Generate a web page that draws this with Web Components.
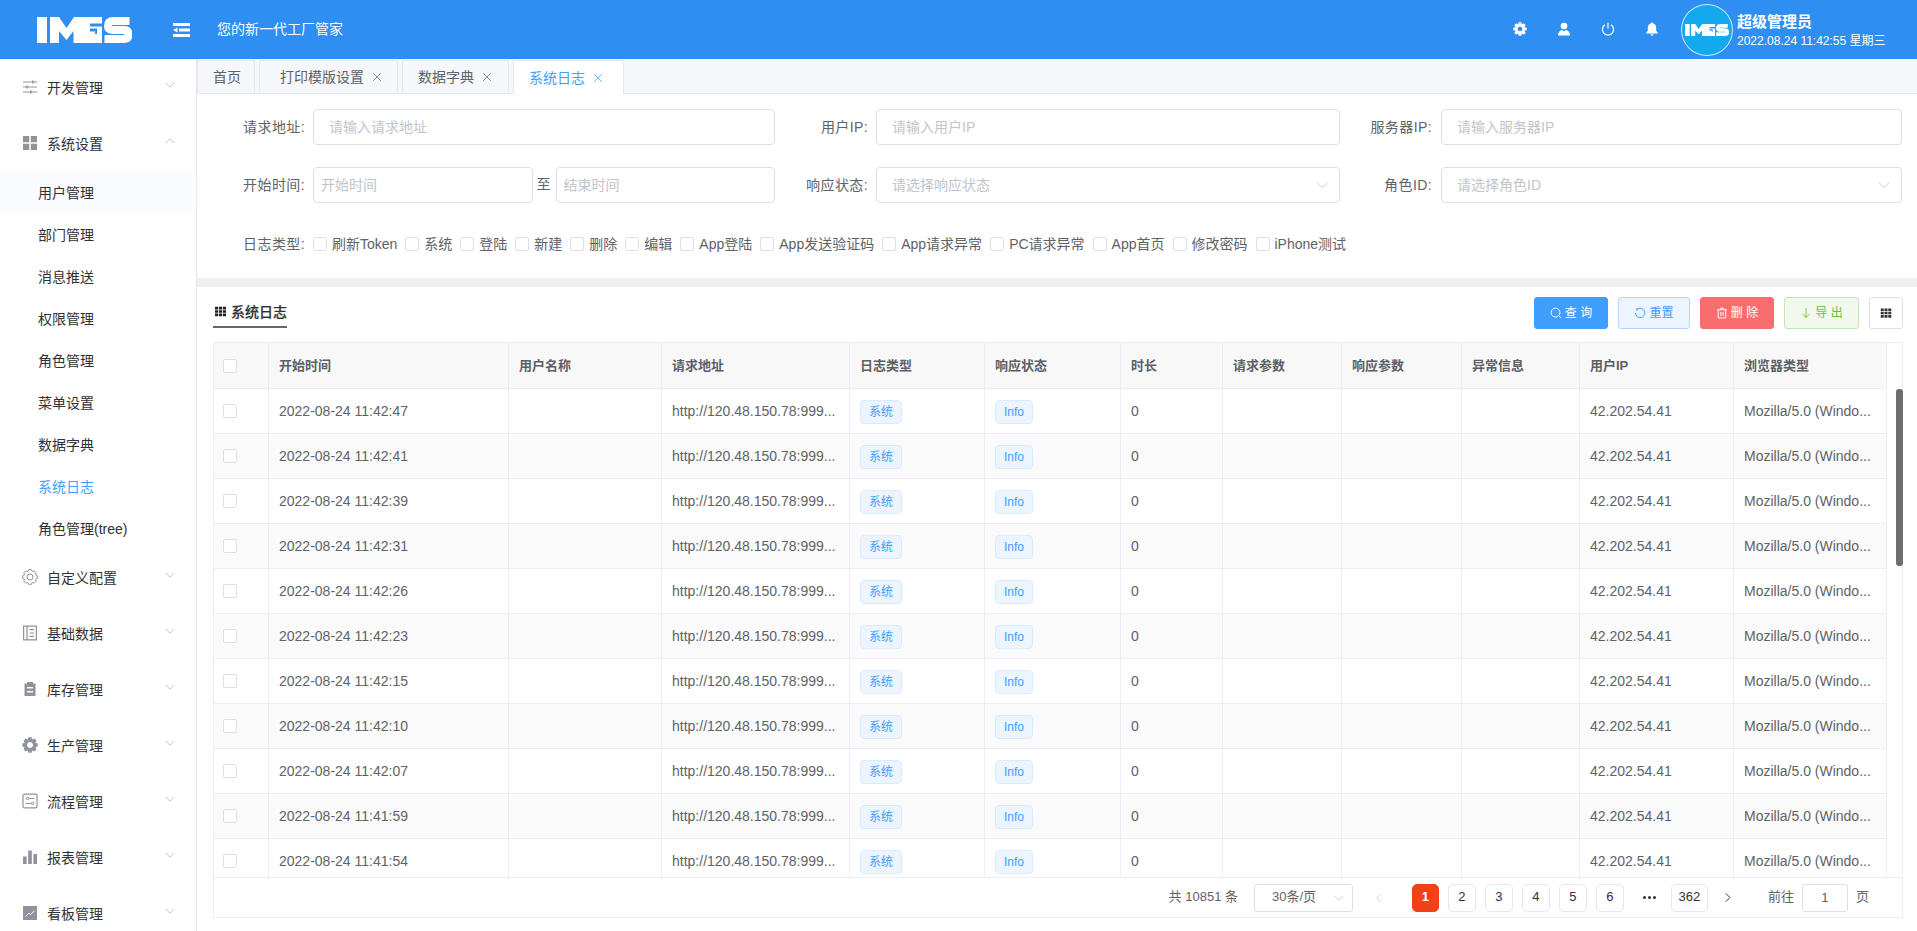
<!DOCTYPE html>
<html lang="zh-CN">
<head>
<meta charset="utf-8">
<title>IMES</title>
<style>
html,body{margin:0;height:100%;overflow:hidden;background:#fff}
body{font:14px/1.4 "Liberation Sans","Noto Sans CJK SC",sans-serif;color:#606266}
</style>
</head>
<body>
<imes-app></imes-app>
<script>
function gear(cx,cy,ro,ri,n){let d='';for(let i=0;i<n;i++){const a=i*2*Math.PI/n,w=Math.PI/n;
const pts=[[ri,a-w*.95],[ro,a-w*.5],[ro,a+w*.5],[ri,a+w*.95]];
pts.forEach((p,j)=>{const x=(cx+p[0]*Math.cos(p[1])).toFixed(2),y=(cy+p[0]*Math.sin(p[1])).toFixed(2);d+=(i==0&&j==0?'M':'L')+x+' '+y});}
return d+'Z'}
const ICONS={
sliders:'<g stroke="currentColor" stroke-width="1.1" fill="none"><path d="M1 3H15M1 8H15M1 13H15"/></g><path fill="currentColor" d="M10 1.5h1.6v3H10zM4.2 6.5h1.6v3H4.2zM8 11.5h1.6v3H8z"/>',
grid4:'<path fill="currentColor" d="M1 1h6.2v6.2H1zM8.8 1H15v6.2H8.8zM1 8.8h6.2V15H1zM8.8 8.8H15V15H8.8z"/>',
gearline:`<path d="${gear(8,8,7.4,5.9,8)}" fill="none" stroke="currentColor" stroke-width="1" stroke-linejoin="round"/><circle cx="8" cy="8" r="3" fill="none" stroke="currentColor" stroke-width="1"/>`,
book:'<path fill="none" stroke="currentColor" stroke-width="1.2" d="M1.6 1.2h12.8v13.6H1.6zM5 1.2v13.6M7.6 4.6h4.4M7.6 8h4.4M7.6 11.4h4.4"/>',
clip:'<path fill="currentColor" fill-rule="evenodd" d="M5 1h6v1.5h2.5V15h-11V2.5H5zM5 6v1.4h6V6zM5 10v1.4h6V10z"/>',
gearfill:`<path fill-rule="evenodd" fill="currentColor" d="${gear(8,8,7.8,5.9,8)}M8 5a3 3 0 1 0 .01 0Z"/>`,
flow:'<rect x="1" y="1.2" width="14" height="13.6" rx="1.6" fill="none" stroke="currentColor" stroke-width="1.2"/><g fill="none" stroke="currentColor"><circle cx="5.4" cy="5.4" r="1.3"/><circle cx="10.6" cy="10.4" r="1.3"/><path d="M6.8 5.4H12.4M3.4 10.4H9.2"/></g>',
bars:'<path fill="currentColor" d="M1 7.5h3.6V15H1zM6.2 1.5h3.6V15H6.2zM11.4 5h3.6v10h-3.6z"/>',
board:'<rect x="1" y="1" width="14" height="14" fill="currentColor"/><path d="M3.5 11.5 7 8.2l1.6 1.4 3.8-4" fill="none" stroke="#fff" stroke-width="1"/>',
down:'<path d="M1 4.5l7 7 7-7" fill="none" stroke="currentColor" stroke-width="1.1"/>',
up:'<path d="M1 11.500l7-7 7 7" fill="none" stroke="currentColor" stroke-width="1.1"/>',
close:'<path d="M.5 .5 15.500 15.500M15.500 .5 .5 15.500" stroke="currentColor" stroke-width="1.500" fill="none"/>',
search:'<circle cx="7.4" cy="7.4" r="5.9" fill="none" stroke="currentColor" stroke-width="1.3"/><path d="M11.6 11.6 14.8 14.8" stroke="currentColor" stroke-width="1.3"/>',
refresh:'<path d="M4.2 3.2A6.2 6.2 0 1 1 2 8" fill="none" stroke="currentColor" stroke-width="1.3"/><path d="M2.8 1.2 5.6 3 3.4 5.6" fill="currentColor"/>',
trash:'<path d="M1.5 3.6h13M6 3.4V1.6h4v1.8M3 3.6V14.6H13V3.6M6.5 6.4v5.6M9.5 6.4v5.6" fill="none" stroke="currentColor" stroke-width="1.3"/>',
arrowdown:'<path d="M8 1.5V14M3 9l5 5 5-5" fill="none" stroke="currentColor" stroke-width="1.2"/>',
grid9:'<path fill="currentColor" d="M1 2h4v3.4H1zM6 2h4v3.4H6zM11 2h4v3.4h-4zM1 6.4h4v3.4H1zM6 6.4h4v3.4H6zM11 6.4h4v3.4h-4zM1 10.8h4v3.4H1zM6 10.8h4v3.4H6zM11 10.8h4v3.4h-4z"/>',
toggle:'<path fill="currentColor" d="M0 0h17v3H0zM6 5.5h11v3H6zM0 7l4.5-2.6v5.2zM0 11h17v3H0z"/>',
hgear:`<path fill-rule="evenodd" fill="#fff" d="${gear(8,8,7.8,5.6,8)}M8 5.4a2.6 2.6 0 1 0 .01 0Z"/>`,
user:'<circle cx="8" cy="4.6" r="3.8" fill="#fff"/><path fill="#fff" d="M1 15.4c0-3.6 2.6-6 4.6-6.4L8 10.6 10.4 9c2 .4 4.6 2.8 4.6 6.4z"/>',
power:'<path d="M4.6 3.2a6.4 6.4 0 1 0 6.8 0M8 .8v6.6" fill="none" stroke="#fff" stroke-width="1.4"/>',
bell:'<path fill="#fff" d="M8 .6c.8 0 1.3.5 1.3 1.2 2.3.6 3.5 2.6 3.5 5V10l2 2.6v.6H1.200v-.6l2-2.600V6.800c0-2.400 1.200-4.400 3.500-5C6.700 1.100 7.200.6 8 .6zM6.200 14.100h3.600C9.700 15 8.900 15.600 8 15.600S6.300 15 6.200 14.100z"/>',
left:'<path d="M10.500 2 4.500 8l6 6" fill="none" stroke="currentColor" stroke-width="1.400"/>',
right:'<path d="M5.500 2l6 6-6 6" fill="none" stroke="currentColor" stroke-width="1.400"/>'
};
function def(name,css,html,init){
  const tpl=document.createElement('template');
  tpl.innerHTML=`<style>${css}</style>${html}`;
  customElements.define(name,class extends HTMLElement{
    constructor(){super();this.attachShadow({mode:'open'}).appendChild(tpl.content.cloneNode(true));}
    connectedCallback(){if(init&&!this._d){this._d=1;init.call(this,this.shadowRoot);}}
  });
}
customElements.define('ui-icon',class extends HTMLElement{
  static get observedAttributes(){return ['name','vb']}
  constructor(){super();this.attachShadow({mode:'open'}).innerHTML='<style>:host{display:inline-flex;width:var(--s,16px);height:var(--s,16px);flex:none}svg{width:100%;height:100%;display:block}</style><svg viewBox="0 0 16 16"></svg>';}
  attributeChangedCallback(k,o,v){const s=this.shadowRoot.querySelector('svg');if(k=='name')s.innerHTML=ICONS[v]||'';else s.setAttribute('viewBox',v);}
});
def('imes-logo',':host{display:block;width:95px;height:26px;color:#fff}svg{width:100%;height:100%;display:block}',
`<svg viewBox="0 0 95 26"><g fill="currentColor">
<path d="M0 0h10v26H0z"/>
<path d="M13 0h9l7.500 11L37 0h8v26h-8.500V14l-7 9-7.500-9v12H13z"/>
<path fill-rule="evenodd" d="M45 0h20v6.500H53v3h12v16.500H45zM53 11.500v3h5.500l-1 2.500H60v-5.500z"/>
</g><path d="M92.500 4H76.500Q71 4 71 9Q71 13 76.500 13H87Q91.500 13 91.500 17.500Q91.500 22 87 22H67.500" fill="none" stroke="currentColor" stroke-width="8"/></svg>`);
def('head-action',':host{display:flex;width:44px;justify-content:center;--s:14px;margin-top:-1px}','<slot></slot>');
def('app-header',`:host{display:flex;align-items:center;height:59px;background:#2e8ef1;color:#fff;flex:none}
.logo{margin-left:37px;width:136px;flex:none}.tgl{--s:17px;width:17px;height:14px;display:block;margin-right:27px}
.slogan{font-size:14px;flex:1}.acts{display:flex;margin-right:1px}
.av{width:50px;height:50px;border:1.500px solid rgba(255,255,255,.75);border-radius:50%;background:#12a9ef;display:flex;align-items:center;justify-content:center;margin:0 4px 0 6px}
.av imes-logo{width:44px;height:12px}
.u{width:180px;padding-top:2px}.n{font-size:15px;font-weight:700;line-height:20px}.d{font-size:12px;line-height:18px;margin-top:0}`,
`<div class="logo"><imes-logo></imes-logo></div><ui-icon class="tgl" name="toggle" vb="0 0 17 14"></ui-icon>
<div class="slogan">您的新一代工厂管家</div>
<div class="acts"><head-action><ui-icon name="hgear"></ui-icon></head-action><head-action><ui-icon name="user"></ui-icon></head-action><head-action><ui-icon name="power"></ui-icon></head-action><head-action><ui-icon name="bell"></ui-icon></head-action></div>
<div class="av"><imes-logo></imes-logo></div>
<div class="u"><div class="n">超级管理员</div><div class="d">2022.08.24 11:42:55 星期三</div></div>`);
def('menu-group',`:host{display:flex;align-items:center;height:56px;padding-left:22px;padding-right:21px;color:#303133;box-sizing:border-box;font-size:14px}
ui-icon{color:#8f939c;--s:16px;margin-right:9px}.t{flex:1;padding-top:4px}.a{--s:10px;color:#a0a4ab;margin:-4px 0 0}`,
`<ui-icon class="i"></ui-icon><span class="t"><slot></slot></span><ui-icon class="a"></ui-icon>`,function(r){
  const i=r.querySelector('.i'),a=r.querySelector('.a');
  i.setAttribute('name',this.getAttribute('icon'));a.setAttribute('name',this.hasAttribute('open')?'up':'down');
});
def('menu-item',`:host{display:flex;align-items:center;height:42px;box-sizing:border-box;padding:4px 0 0 38px;color:#303133;font-size:14px}
:host([hover]){background:#f9fbfe}:host([active]){color:#409eff}`,'<slot></slot>');
def('app-sidebar',`:host{display:block;width:196px;flex:none;border-right:1px solid #e4e6e8;box-shadow:1px 0 1px rgba(0,0,0,.03);overflow:hidden;background:#fff}`,
`<menu-group icon="sliders">开发管理</menu-group>
<menu-group icon="grid4" open>系统设置</menu-group>
<menu-item hover>用户管理</menu-item><menu-item>部门管理</menu-item><menu-item>消息推送</menu-item><menu-item>权限管理</menu-item><menu-item>角色管理</menu-item><menu-item>菜单设置</menu-item><menu-item>数据字典</menu-item><menu-item active>系统日志</menu-item><menu-item>角色管理(tree)</menu-item>
<menu-group icon="gearline">自定义配置</menu-group><menu-group icon="book">基础数据</menu-group><menu-group icon="clip">库存管理</menu-group><menu-group icon="gearfill">生产管理</menu-group><menu-group icon="flow">流程管理</menu-group><menu-group icon="bars">报表管理</menu-group><menu-group icon="board">看板管理</menu-group>`);
def('tab-item',`:host{display:flex;align-items:center;height:33px;box-sizing:border-box;background:#f5f7fa;border:1px solid #e4e7ed;border-bottom:0;border-radius:2px 2px 0 0;margin-right:4px;color:#606266;font-size:14px;padding:2px var(--pr,17px) 0 var(--pl,15px)}
:host([active]){background:#fff;color:#409eff;height:34px;--pr:21px}
:host([plain]){--pr:13px}
.x{--s:8px;margin-left:9px;margin-top:-2px}:host([plain]) .x{display:none}`,'<slot></slot><ui-icon class="x" name="close"></ui-icon>');
def('tab-strip',`:host{display:flex;align-items:flex-start;height:35px;box-sizing:border-box;padding-top:1px;background:#f5f7fa;border-bottom:1px solid #e4e7ed;flex:none}`,'<slot></slot>');
def('text-box',`:host{display:flex;align-items:center;height:36px;box-sizing:border-box;border:1px solid #dcdfe6;border-radius:4px;background:#fff;color:#c0c4cc;font-size:14px;padding:2px 11px 0 var(--pad,15px);flex:1;min-width:0}
.s{flex:1}ui-icon{--s:12px;display:none;color:#c0c4cc;margin-top:-2px}:host([select]) ui-icon{display:block}`,'<span class="s"><slot></slot></span><ui-icon name="down"></ui-icon>');
def('form-field',`:host{display:flex;align-items:center;height:36px}.l{width:var(--lw);text-align:right;margin-right:var(--lg,8px);color:#606266;font-size:14px;flex:none;padding-top:2px;letter-spacing:.4px}
.b{flex:1;display:flex;align-items:center;min-width:0}`,'<span class="l"></span><div class="b"><slot></slot></div>',function(r){r.querySelector('.l').textContent=this.getAttribute('label')});
def('check-box',`:host{display:block;width:14px;height:14px;box-sizing:border-box;border:1px solid #dcdfe6;border-radius:2px;background:#fff;flex:none}`,'');
def('check-item',`:host{display:flex;align-items:center;margin-right:8px;font-size:14px;color:#606266}check-box{margin-right:5px;margin-top:-2px}`,'<check-box></check-box><slot></slot>');
def('filter-form',`:host{display:block;height:184px;box-sizing:border-box;padding-top:15px;flex:none}
.g{display:grid;grid-template-columns:578px 565px 562px;row-gap:22px}
.c{--lw:93px}.c3{--lw:92px;--lg:9px}.c1{--lw:108px}
.dt{--pad:7px}.to{margin:0 5px 0 4px;flex:none;color:#606266}
.types{display:flex;align-items:center;margin-top:30px;padding:2px 0 0 46px;height:20px}
.tl{width:62px;margin-right:8px;text-align:right;flex:none;letter-spacing:.4px}`,
`<div class="g">
<form-field class="c1" label="请求地址:"><text-box>请输入请求地址</text-box></form-field>
<form-field class="c" label="用户IP:"><text-box>请输入用户IP</text-box></form-field>
<form-field class="c3" label="服务器IP:"><text-box>请输入服务器IP</text-box></form-field>
<form-field class="c1" label="开始时间:"><text-box class="dt">开始时间</text-box><span class="to">至</span><text-box class="dt">结束时间</text-box></form-field>
<form-field class="c" label="响应状态:"><text-box select>请选择响应状态</text-box></form-field>
<form-field class="c3" label="角色ID:"><text-box select>请选择角色ID</text-box></form-field>
</div>
<div class="types"><span class="tl">日志类型:</span>
<check-item>刷新Token</check-item><check-item>系统</check-item><check-item>登陆</check-item><check-item>新建</check-item><check-item>删除</check-item><check-item>编辑</check-item><check-item>App登陆</check-item><check-item>App发送验证码</check-item><check-item>App请求异常</check-item><check-item>PC请求异常</check-item><check-item>App首页</check-item><check-item>修改密码</check-item><check-item>iPhone测试</check-item>
</div>`);
def('ui-btn',`:host{display:inline-flex;align-items:center;justify-content:center;height:32px;box-sizing:border-box;border:1px solid #dcdfe6;border-radius:3px;font-size:12px;background:#fff;color:#606266;flex:none;white-space:pre}
ui-icon{--s:12px;margin-right:3px}
:host([kind=primary]){background:#409eff;border-color:#409eff;color:#fff}
:host([kind=info]){background:#ecf5ff;border-color:#b3d8ff;color:#409eff}
:host([kind=danger]){background:#f96d6f;border-color:#f96d6f;color:#fff}
:host([kind=success]){background:#f0f9eb;border-color:#c2e7b0;color:#67c23a}
:host([kind=default]) ui-icon{margin:0;color:#303133}`,'<ui-icon></ui-icon><slot></slot>',function(r){r.querySelector('ui-icon').setAttribute('name',this.getAttribute('icon'))});
def('tool-bar',`:host{display:flex;align-items:flex-start;height:55px;box-sizing:border-box;padding:10px 14px 0 16px;flex:none}
.t{display:flex;align-items:center;height:31px;box-sizing:border-box;border-bottom:2px solid #666;color:#303133;font-size:14px;font-weight:500;padding-left:2px;-webkit-text-stroke:.2px #303133}
.t span{margin-top:3px}.t ui-icon{--s:11px;margin-right:5px;color:#222}
.sp{flex:1}.b{display:flex;gap:10px}`,
`<div class="t"><ui-icon name="grid9" vb="1 2 14 12.200"></ui-icon><span>系统日志</span></div><div class="sp"></div>
<div class="b"><ui-btn kind="primary" icon="search" style="width:74px">查 询</ui-btn><ui-btn kind="info" icon="refresh" style="width:72px">重置</ui-btn><ui-btn kind="danger" icon="trash" style="width:74px">删 除</ui-btn><ui-btn kind="success" icon="arrowdown" style="width:75px">导 出</ui-btn><ui-btn kind="default" icon="grid9" style="width:34px"></ui-btn></div>`);
def('ui-tag',`:host{display:inline-flex;align-items:center;justify-content:center;height:24px;box-sizing:border-box;padding:1px 8px 0;background:#ecf5ff;border:1px solid #d9ecff;border-radius:4px;color:#409eff;font-size:12px;vertical-align:middle}`,'<slot></slot>');
const times=['11:42:47','11:42:41','11:42:39','11:42:31','11:42:26','11:42:23','11:42:15','11:42:10','11:42:07','11:41:59','11:41:54'];
const widths=[55,240,153,188,135,136,102,119,120,118,154,153];
const heads=['','开始时间','用户名称','请求地址','日志类型','响应状态','时长','请求参数','响应参数','异常信息','用户IP','浏览器类型'];
def('log-table',`:host{display:flex;min-height:0;flex:1}
.w{width:1673px;height:100%;overflow:hidden;flex:none}
.bar{flex:1;padding:46px 0 0 9px;box-sizing:border-box}
.th{width:7px;height:177px;background:#6e6e6e;border-radius:3px}
table{border-collapse:separate;border-spacing:0;table-layout:fixed;width:1673px}
th,td{border-right:1px solid #ebeef5;border-bottom:1px solid #ebeef5;padding:2px 10px 0;text-align:left;box-sizing:border-box;overflow:hidden;white-space:nowrap;font-size:14px;color:#606266}
th{height:46px;background:#f8f8f9;font-size:13px;font-weight:700;color:#5c5f66}
td{height:45px}tr:nth-child(even) td{background:#fafafa}
td:first-child,th:first-child{padding:0 0 0 9px}`,
`<div class="w"><table><colgroup></colgroup><thead><tr></tr></thead><tbody></tbody></table></div><div class="bar"><div class="th"></div></div>`,function(r){
  r.querySelector('colgroup').innerHTML=widths.map(w=>`<col style="width:${w}px">`).join('');
  r.querySelector('thead tr').innerHTML=heads.map((h,i)=>i?`<th>${h}</th>`:'<th><check-box></check-box></th>').join('');
  r.querySelector('tbody').innerHTML=times.map(t=>`<tr><td><check-box></check-box></td><td>2022-08-24 ${t}</td><td></td><td>http://120.48.150.78:999...</td><td><ui-tag>系统</ui-tag></td><td><ui-tag>Info</ui-tag></td><td>0</td><td></td><td></td><td></td><td>42.202.54.41</td><td>Mozilla/5.0 (Windo...</td></tr>`).join('');
});
def('page-btn',`:host{display:flex;align-items:center;justify-content:center;min-width:28px;height:28px;box-sizing:border-box;padding:0 3px;border:1px solid #e4e7ed;border-radius:5px;background:#fff;color:#303133;font-size:13px;flex:none;margin-right:9px}
:host([active]){background:#f04216;border-color:#f04216;color:#fff;font-weight:700;min-width:27px;margin-right:9px}`,'<slot></slot>');
def('page-bar',`:host{display:flex;align-items:center;justify-content:flex-end;height:40px;box-sizing:border-box;border-top:1px solid #ebeef5;padding-right:33px;font-size:13px;color:#606266;flex:none}
.sel{display:flex;align-items:center;width:99px;height:28px;box-sizing:border-box;border:1px solid #dcdfe6;border-radius:3px;margin:0 21px 0 16px;padding-left:17px;color:#606266}
.sel span{flex:1}.sel ui-icon{--s:10px;margin-right:8px;color:#b8bcc4}
.p{--s:10px;color:#c0c4cc;margin-right:28px}.n{--s:11px;color:#303133;margin:0 35px 0 14px}
.go{width:46px;height:28px;box-sizing:border-box;border:1px solid #dcdfe6;border-radius:3px;margin:0 8px 0 8px;text-align:center;line-height:26px}
.dots{display:flex;align-items:center;gap:2px;width:38px;padding:0 0 0 11px;box-sizing:border-box;margin-left:-1px;margin-right:1px;flex:none}.dots i{width:3px;height:3px;border-radius:50%;background:#303133}`,
`<span>共 10851 条</span><div class="sel"><span>30条/页</span><ui-icon name="down"></ui-icon></div>
<ui-icon class="p" name="left"></ui-icon>
<page-btn active>1</page-btn><page-btn>2</page-btn><page-btn>3</page-btn><page-btn>4</page-btn><page-btn>5</page-btn><page-btn>6</page-btn>
<div class="dots"><i></i><i></i><i></i></div><page-btn style="margin-right:0;width:37px">362</page-btn>
<ui-icon class="n" name="right"></ui-icon><span>前往</span><div class="go">1</div><span>页</span>`);
def('log-panel',`:host{display:flex;flex-direction:column;flex:1;min-height:0}
.box{display:flex;flex-direction:column;flex:1;min-height:0;margin:0 14px 13px 16px;border:1px solid #ebeef5}`,
`<tool-bar></tool-bar><div class="box"><log-table></log-table><page-bar></page-bar></div>`);
def('imes-app',`:host{display:flex;flex-direction:column;height:100vh;overflow:hidden}
.m{display:flex;flex:1;min-height:0}.c{display:flex;flex-direction:column;flex:1;min-width:0;background:#fff}
.sep{height:9px;background:#f0f0f0;flex:none}`,
`<app-header></app-header><div class="m"><app-sidebar></app-sidebar><div class="c">
<tab-strip><tab-item plain>首页</tab-item><tab-item style="--pl:20px;--pr:16px">打印模版设置</tab-item><tab-item>数据字典</tab-item><tab-item active>系统日志</tab-item></tab-strip>
<filter-form></filter-form><div class="sep"></div><log-panel></log-panel></div></div>`);
</script>
</body>
</html>
